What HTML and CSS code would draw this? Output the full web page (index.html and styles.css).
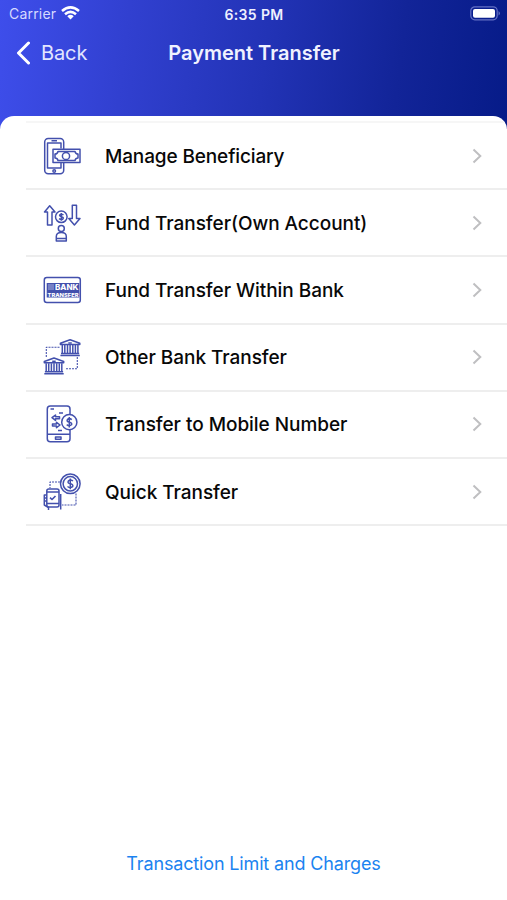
FILE: index.html
```html
<!DOCTYPE html>
<html lang="en">
<head>
<meta charset="utf-8">
<title>Payment Transfer</title>
<link rel="stylesheet" href="styles.css">
</head>
<body>
<div class="screen">
  <header class="header">
    <div class="status">
      <div class="carrier"><span>Carrier</span>
        <svg class="wifi" width="19" height="14" viewBox="0 0 19 14" fill="none" stroke="#fff" stroke-width="2.5"><path d="M1 5Q9.500-2.300 18 5M4 8.300Q9.500 3.500 15 8.300"/><path d="M6.300 10.200Q9.500 7.500 12.700 10.200L9.500 13.500Z" fill="#fff" stroke="none"/></svg>
      </div>
      <div class="time">6:35 PM</div>
      <svg class="battery" width="31" height="15" viewBox="0 0 31 15"><rect x=".8" y=".8" width="26.400" height="13" rx="4" fill="none" stroke="#6470c4" stroke-width="1.200"/><rect x="3" y="3" width="22" height="8.700" rx="2" fill="#fff"/><path d="M28.600 5Q31 7.300 28.600 9.600Z" fill="#7682cc"/></svg>
    </div>
    <nav class="nav">
      <div class="back"><svg width="15" height="24" viewBox="0 0 15 24" fill="none" stroke="#fff" stroke-width="3" stroke-linecap="round" stroke-linejoin="round"><path d="M13.500 2L3.500 12L13.500 22"/></svg><span>Back</span></div>
      <h1 class="title">Payment Transfer</h1>
    </nav>
  </header>
  <main class="sheet">
    <ul class="list">
      <li class="row">
        <svg class="icon" viewBox="0 0 40 40"><rect x="2.700" y="2.500" width="19" height="35.300" rx="3.500"/><path d="M19 12.500V7H5.500V32H19V27M9.500 4.800H15"/><circle cx="12.200" cy="35" r="1.300"/><rect class="paper" x="11" y="13.300" width="27" height="13.200"/><path d="M16 15.500H33Q33.500 18 36 18V22Q33.500 22 33 24.500H16Q15.500 22 13 22V18Q15.500 18 16 15.500Z"/><circle cx="24" cy="20" r="3.600"/></svg>
        <span class="label manage">Manage Beneficiary</span><svg class="chevron" viewBox="0 0 10 16"><path d="M1.500 1.500L8.300 8L1.500 14.500"/></svg>
      </li>
      <li class="row">
        <svg class="icon" viewBox="0 0 40 40"><path d="M7.700 2.800L13 9H10V22H5.500V9H2.500ZM30.300 2.300H34.500V15.500H38L32.400 22L26.800 15.500H30.300Z"/><circle cx="19.300" cy="13.800" r="5.800"/><path d="M21.500 11.800Q19.300 10.500 17.800 11.800Q17 13 19.300 13.700Q22 14.300 21 15.800Q19.300 17.200 17 15.700M19.300 10V17.700"/><circle cx="19.300" cy="25.500" r="3"/><path d="M14.300 38V33.500Q14.300 29.500 19.300 29.500Q24.300 29.500 24.300 33.500V38ZM14.300 35.500H24.300"/></svg>
        <span class="label own">Fund Transfer(Own Account)</span><svg class="chevron" viewBox="0 0 10 16"><path d="M1.500 1.500L8.300 8L1.500 14.500"/></svg>
      </li>
      <li class="row">
        <svg class="icon" viewBox="0 0 40 40"><rect x="2.300" y="7.500" width="36" height="25" rx="2.500"/><path class="solid" d="M4.700 13H37.300V27.600H4.700Z"/><path class="light" d="M6 15H12M6 17H12M6 19H12"/><text class="bank" x="13" y="19.500" textLength="23.500" lengthAdjust="spacingAndGlyphs">BANK</text><text class="transfer" x="5.500" y="26.500" textLength="31" lengthAdjust="spacingAndGlyphs">TRANSFER</text></svg>
        <span class="label within">Fund Transfer Within Bank</span><svg class="chevron" viewBox="0 0 10 16"><path d="M1.500 1.500L8.300 8L1.500 14.500"/></svg>
      </li>
      <li class="row">
        <svg class="icon" viewBox="0 0 40 40"><defs><g id="building"><path d="M.6 5.500V4.200L10.300.7L20 4.200V5.500ZM.6 16.500H20M1.200 14.500H19.400"/><path d="M2.500 6V14M5 6V14M7.700 6V14M10.300 6V14M13 6V14M15.600 6V14M18.100 6V14" stroke-width="1.500"/><path d="M8.500 4H12"/></g></defs><path class="dash" d="M17.500 10.300H4.300V20M35.300 20V31.700H23"/><use href="#building" x="17.800" y="2"/><use href="#building" x="1.700" y="20.300"/></svg>
        <span class="label other">Other Bank Transfer</span><svg class="chevron" viewBox="0 0 10 16"><path d="M1.500 1.500L8.300 8L1.500 14.500"/></svg>
      </li>
      <li class="row">
        <svg class="icon" viewBox="0 0 40 40"><rect x="5.300" y="2" width="22.700" height="35.800" rx="3"/><path d="M5.500 30.300H28M13.500 33H19V35.300H13.500ZM8.500 5H12M17 9H21M16 26.500H20"/><path d="M10 13.700L13.500 11V12.700H17.500V14.700H13.500V16.400ZM18 21L14.500 18.300V20H10.500V22H14.500V23.700Z"/><circle class="paper" cx="27.300" cy="18.200" r="7.600"/><path d="M29.800 15.700Q27.300 13.700 25.400 15.500Q24.300 17.600 27.300 18.200Q30.500 18.800 29.500 20.800Q27.300 22.700 24.700 20.700M27.300 13V23.500"/></svg>
        <span class="label mobile">Transfer to Mobile Number</span><svg class="chevron" viewBox="0 0 10 16"><path d="M1.500 1.500L8.300 8L1.500 14.500"/></svg>
      </li>
      <li class="row">
        <svg class="icon" viewBox="0 0 40 40"><path class="dash" d="M18 10H8V16M34 21.500V33H20"/><circle class="paper" cx="28.300" cy="11.800" r="9.800"/><circle cx="28.300" cy="11.800" r="7.200"/><path d="M31 9Q28.300 7 26.300 9Q25.300 11.300 28.300 11.800Q31.700 12.500 30.600 14.700Q28.300 16.500 25.500 14.500M28.300 6.500V17.300"/><rect x="4.800" y="17" width="12.200" height="18" rx="2"/><path d="M5 20H17M5 31.500H17M18.700 22V37.500M4.800 23H2.300V33L6.500 35.500V38M2.300 26H5M2.300 29H5"/><path d="M8 25.700L10 27.500L13.500 24" stroke-width="1.600"/></svg>
        <span class="label quick">Quick Transfer</span><svg class="chevron" viewBox="0 0 10 16"><path d="M1.500 1.500L8.300 8L1.500 14.500"/></svg>
      </li>
    </ul>
    <a class="limits">Transaction Limit and Charges</a>
  </main>
</div>
</body>
</html>
```
FILE: styles.css
```css
* { box-sizing: border-box; }
body { margin: 0; font-family: Inter, "Liberation Sans", sans-serif; background: #fff; }
.screen { width: 507px; height: 900px; display: flex; flex-direction: column; overflow: hidden; }
.header { height: 129px; flex: none; background: linear-gradient(97deg, #3e4eeb 0%, #3140d0 25%, #2233b6 52%, #122498 78%, #061b88 100%); color: #fff; }
.status { height: 28px; display: grid; grid-template-columns: 1fr auto 1fr; align-items: center; padding: 0 6px 0 9px; font-size: 14px; }
.carrier { display: flex; align-items: center; gap: 5px; color: #d6daff; letter-spacing: .2px; margin-top: -1px; }
.wifi { margin-top: -1px; }
.time { font-size: 14px; font-weight: 600; letter-spacing: .35px; color: #eef0ff; margin-left: -2px; }
.battery { justify-self: end; margin-top: -2px; }
.nav { height: 48px; display: grid; grid-template-columns: 1fr auto 1fr; align-items: center; padding: 1px 14px 0 15px; }
.back { display: flex; align-items: center; gap: 11px; font-size: 20px; letter-spacing: -.1px; color: #e2e5ff; }
.title { margin: 0; font-size: 20px; font-weight: 600; color: #f0f2ff; white-space: nowrap; }
.sheet { flex: 1; margin-top: -13px; padding-top: 5px; background: #fff; border-radius: 14px 14px 0 0; overflow: hidden; display: flex; flex-direction: column; }
.list { list-style: none; margin: 0 0 0 26px; padding: 0; border-top: 2px solid #f6f6f6; }
.row { height: 67.2px; padding: 0 25px 0 16px; display: flex; align-items: center; border-bottom: 2px solid #eee; }
.icon { width: 40px; height: 40px; flex: none; margin-right: 23px; fill: none; stroke: #4350ad; stroke-width: 1.5; stroke-linejoin: round; }
.paper { fill: #fff; }
.solid { fill: #4350ad; stroke: none; }
.light { stroke: #c4caeb; stroke-width: .8; }
.dash { stroke-dasharray: 2 1; stroke-width: 1.1; }
.bank, .transfer { fill: #fff; stroke: none; font-weight: 800; }
.bank { font-size: 7px; }
.transfer { font-size: 5px; }
.label { flex: 1; padding-top: 1px; font-size: 19px; font-weight: 500; letter-spacing: -.04px; color: #080808; white-space: nowrap; }
.manage { letter-spacing: -.13px; }
.chevron { width: 10px; height: 16px; fill: none; stroke: #bfbfc1; stroke-width: 2; }
.limits { margin: auto 0 24px; text-align: center; font-size: 18px; line-height: 24px; letter-spacing: -.15px; color: #1b83f0; }
```
